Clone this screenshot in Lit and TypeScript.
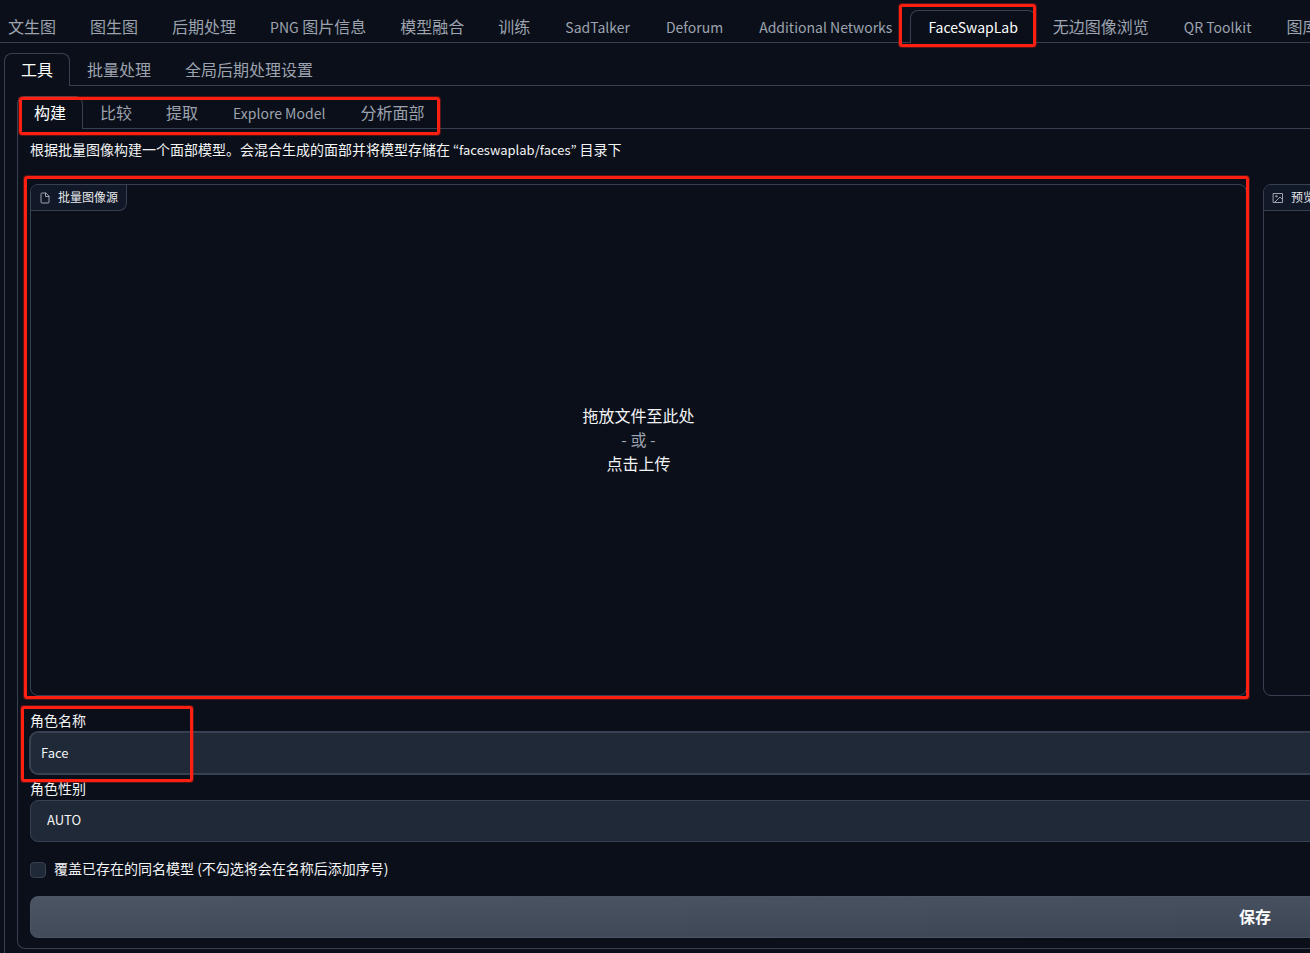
import { LitElement, html, css, svg } from "lit";
import { customElement, property, state } from "lit/decorators.js";

@customElement("tab-bar")
class TabBar extends LitElement {
  @property({ attribute: false }) tabs: string[] = [];
  @property() selected = "";
  @property({ type: Boolean }) markSelected = false;

  static styles = css`
    :host {
      display: flex;
      border-bottom: 1px solid #374151;
    }
    .tab {
      flex: none;
      box-sizing: border-box;
      position: relative;
      height: 33px;
      margin: 0 0 -1px;
      padding: 0 16px 2px;
      border: 1px solid transparent;
      border-bottom: 0;
      border-radius: 8px 8px 0 0;
      background: none;
      color: #9ca3af;
      font: inherit;
      font-size: 16px;
      line-height: 30px;
      white-space: nowrap;
      cursor: pointer;
    }
    .latin-only {
      padding: 0 17px 2px;
    }
    .latin {
      font-size: 14px;
    }
    .selected {
      border-color: #374151;
      background: #0b0f19;
      color: #fff;
    }
    .marked::after {
      content: "";
      position: absolute;
      inset: -7px -1px -4px -12px;
      border: 3px solid #fb2011;
      border-radius: 3px;
      box-shadow: 0 0 0 1px rgba(251, 32, 17, 0.3);
      pointer-events: none;
    }
  `;

  private pick(tab: string) {
    this.selected = tab;
  }

  /* Latin words are set a size smaller than the Chinese text around them. */
  private label(tab: string) {
    return tab
      .split(/([A-Za-z]+(?: [A-Za-z]+)*)/)
      .filter((part) => part)
      .map((part) => (/[A-Za-z]/.test(part) ? html`<span class="latin">${part}</span>` : part));
  }

  render() {
    return this.tabs.map((tab) => {
      const on = tab === this.selected;
      const latinOnly = /^[A-Za-z ]+$/.test(tab);
      return html`<button
        type="button"
        class="tab ${latinOnly ? "latin-only" : ""} ${on ? "selected" : ""} ${on && this.markSelected ? "marked" : ""}"
        aria-pressed=${on ? "true" : "false"}
        @click=${() => this.pick(tab)}
      >${this.label(tab)}</button>`;
    });
  }
}

const fileIcon = svg`<path d="M13 2H6a2 2 0 0 0-2 2v16a2 2 0 0 0 2 2h12a2 2 0 0 0 2-2V9z"/><path d="M13 2v7h7"/>`;
const imageIcon = svg`<rect x="3" y="3" width="18" height="18"/><circle cx="8.500" cy="8.500" r="1.500"/><path d="M21 15l-5-5L5 21"/>`;

@customElement("app-root")
class AppRoot extends LitElement {
  @state() private characterName = "Face";

  private mainTabs = ["文生图", "图生图", "后期处理", "PNG 图片信息", "模型融合", "训练", "SadTalker", "Deforum", "Additional Networks", "FaceSwapLab", "无边图像浏览", "QR Toolkit", "图库浏览器"];
  private groupTabs = ["工具", "批量处理", "全局后期处理设置"];
  private toolTabs = ["构建", "比较", "提取", "Explore Model", "分析面部"];

  static styles = css`
    :host {
      display: block;
      box-sizing: border-box;
      height: 100vh;
      padding-top: 10px;
      overflow: hidden;
      background: #0b0f19;
      color: #f3f4f6;
      font-family: "Noto Sans CJK SC", "Noto Sans", sans-serif;
      font-size: 14px;
      line-height: 20px;
    }
    .page {
      box-sizing: border-box;
      width: calc(200% - 110px);
      padding: 0 4px;
    }
    .main-tabs {
      margin: 0 -4px 10px -13px;
    }
    .panel {
      border: 1px solid #374151;
      border-top: 0;
      border-radius: 0 0 8px 8px;
      padding: 10px 12px;
    }
    .mark {
      position: relative;
    }
    .mark::after {
      content: "";
      position: absolute;
      box-sizing: border-box;
      border: 3px solid #fb2011;
      border-radius: 3px;
      box-shadow: 0 0 0 1px rgba(251, 32, 17, 0.3);
      pointer-events: none;
      z-index: 2;
    }
    .mark-tabs::after {
      inset: 1px auto -6px 2px;
      width: 421px;
    }
    .mark-upload::after {
      inset: -9px -3px -4px -7px;
    }
    .mark-name::after {
      inset: -4px auto -8px -9px;
      width: 172px;
    }
    .intro {
      margin: 0 0 24px;
    }
    .latin {
      font-family: "Noto Sans CJK KR", "Noto Sans", sans-serif;
      font-size: 13px;
    }
    .columns {
      display: grid;
      grid-template-columns: 1fr 1fr;
      gap: 16px;
      margin-bottom: 14px;
    }
    .box {
      box-sizing: border-box;
      display: flex;
      flex-direction: column;
      height: 512px;
      border: 1px solid #374151;
      border-radius: 8px;
    }
    .box-label {
      display: flex;
      align-items: center;
      align-self: flex-start;
      gap: 7px;
      padding: 0 8px;
      height: 25px;
      border: 1px solid #374151;
      border-width: 0 1px 1px 0;
      border-radius: 7px 0 8px 0;
      background: #111827;
      color: #e5e7eb;
      font-size: 12px;
    }
    .box-label span {
      padding-bottom: 2px;
    }
    .icon {
      width: 12px;
      height: 12px;
      fill: none;
      stroke: #9ca3af;
      stroke-width: 2;
      stroke-linecap: round;
      stroke-linejoin: round;
    }
    .drop {
      flex: 1;
      padding: 0 0 28px;
      border: 0;
      background: none;
      color: inherit;
      font: inherit;
      font-size: 16px;
      line-height: 24px;
      cursor: pointer;
    }
    .drop span {
      display: block;
    }
    .drop .or {
      color: #9ca3af;
    }
    .field {
      display: flex;
      flex-direction: column;
    }
    .field label {
      padding-bottom: 2px;
    }
    .field + .field {
      margin-top: 4px;
    }
    .text,
    .choice {
      box-sizing: border-box;
      width: 100%;
      height: 42px;
      margin: 0;
      border: 1px solid #374151;
      border-radius: 8px;
      background: #1f2937;
      color: #f3f4f6;
      font: inherit;
      font-size: 13px;
      outline: none;
    }
    .text {
      padding: 0 10px 2px;
      box-shadow: 0 0 0 1px #374151;
    }
    .choice {
      appearance: none;
      padding: 0 16px 2px;
    }
    .check {
      display: flex;
      align-items: center;
      gap: 8px;
      margin: 16px 0 14px;
    }
    .check label {
      padding-bottom: 4px;
    }
    .tick {
      appearance: none;
      box-sizing: border-box;
      width: 16px;
      height: 16px;
      margin: 0;
      border: 1px solid #374151;
      border-radius: 4px;
      background: #1f2937;
    }
    .tick:checked {
      background: #2563eb;
    }
    .save {
      display: block;
      box-sizing: border-box;
      width: 100%;
      height: 42px;
      padding: 0 0 2px;
      border: 1px solid #4b5563;
      border-radius: 8px;
      background: linear-gradient(to bottom right, #4b5563, #374151);
      color: #fff;
      font: inherit;
      font-size: 16px;
      font-weight: 600;
      cursor: pointer;
    }
  `;

  render() {
    return html`
      <div class="page">
        <tab-bar class="main-tabs" .tabs=${this.mainTabs} selected="FaceSwapLab" markSelected></tab-bar>
        <tab-bar .tabs=${this.groupTabs} selected="工具"></tab-bar>
        <section class="panel">
          <div class="mark mark-tabs">
            <tab-bar .tabs=${this.toolTabs} selected="构建"></tab-bar>
          </div>
          <div class="panel">
            <p class="intro">根据批量图像构建一个面部模型。会混合生成的面部并将模型存储在<span class="latin"> “faceswaplab/faces” </span>目录下</p>
            <div class="columns">
              <div class="box mark mark-upload">
                <div class="box-label"><svg class="icon" viewBox="0 0 24 24">${fileIcon}</svg><span>批量图像源</span></div>
                <button type="button" class="drop">
                  <span>拖放文件至此处</span><span class="or">- 或 -</span><span>点击上传</span>
                </button>
              </div>
              <div class="box">
                <div class="box-label"><svg class="icon" viewBox="0 0 24 24">${imageIcon}</svg><span>预览</span></div>
              </div>
            </div>
            <div class="field mark mark-name">
              <label for="name">角色名称</label>
              <input
                id="name"
                class="text"
                type="text"
                .value=${this.characterName}
                @input=${(e: Event) => (this.characterName = (e.target as HTMLInputElement).value)}
              />
            </div>
            <div class="field">
              <label for="gender">角色性别</label>
              <select id="gender" class="choice"><option>AUTO</option></select>
            </div>
            <div class="check">
              <input id="overwrite" class="tick" type="checkbox" />
              <label for="overwrite">覆盖已存在的同名模型 (不勾选将会在名称后添加序号)</label>
            </div>
            <button type="button" class="save">保存</button>
          </div>
        </section>
      </div>
    `;
  }
}
